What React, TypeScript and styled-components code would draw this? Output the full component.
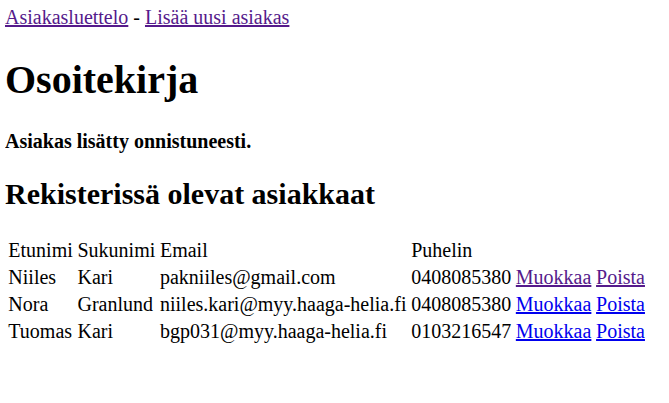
import React from "react";
import styled, { createGlobalStyle } from "styled-components";

const GlobalStyle = createGlobalStyle`
  html, body {
    background: #ffffff;
  }
  body {
    margin: 6px 5px;
    font-family: "Liberation Serif", "Times New Roman", serif;
    font-size: 20px;
    color: #000000;
  }
`;

const Nav = styled.div`
  line-height: normal;
`;

const Link = styled.a<{ $visited?: boolean }>`
  color: ${(p) => (p.$visited ? "#551a8b" : "#0000ee")};
  text-decoration: underline;
  cursor: pointer;
`;

const Title = styled.h1`
  font-size: 40px;
  font-weight: bold;
  margin: 26.8px 0;
`;

const Notice = styled.p`
  font-weight: bold;
  margin: 20px 0;
`;

const Subtitle = styled.h2`
  font-size: 30px;
  font-weight: bold;
  margin: 24.9px 0;
`;

const Table = styled.table`
  border-collapse: separate;
  border-spacing: 2px;
  font-size: 20px;
`;

const HeadCell = styled.th`
  font-weight: normal;
  text-align: left;
  padding: 1px 1.35px;
`;

const Cell = styled.td`
  padding: 1px 1.35px;
`;

type Customer = {
  first: string;
  last: string;
  email: string;
  phone: string;
  visited: boolean;
};

const customers: Customer[] = [
  { first: "Niiles", last: "Kari", email: "pakniiles@gmail.com", phone: "0408085380", visited: true },
  { first: "Nora", last: "Granlund", email: "niiles.kari@myy.haaga-helia.fi", phone: "0408085380", visited: false },
  { first: "Tuomas", last: "Kari", email: "bgp031@myy.haaga-helia.fi", phone: "0103216547", visited: false },
];

export default function App() {
  return (
    <>
      <GlobalStyle />
      <Nav>
        <Link $visited href="#">Asiakasluettelo</Link> - <Link $visited href="#">Lisää uusi asiakas</Link>
      </Nav>
      <Title>Osoitekirja</Title>
      <Notice>Asiakas lisätty onnistuneesti.</Notice>
      <Subtitle>Rekisterissä olevat asiakkaat</Subtitle>
      <Table>
        <thead>
          <tr>
            <HeadCell>Etunimi</HeadCell>
            <HeadCell>Sukunimi</HeadCell>
            <HeadCell>Email</HeadCell>
            <HeadCell>Puhelin</HeadCell>
            <HeadCell></HeadCell>
            <HeadCell></HeadCell>
          </tr>
        </thead>
        <tbody>
          {customers.map((c) => (
            <tr key={c.email}>
              <Cell>{c.first}</Cell>
              <Cell>{c.last}</Cell>
              <Cell>{c.email}</Cell>
              <Cell>{c.phone}</Cell>
              <Cell>
                <Link $visited={c.visited} href="#">Muokkaa</Link>
              </Cell>
              <Cell>
                <Link $visited={c.visited} href="#">Poista</Link>
              </Cell>
            </tr>
          ))}
        </tbody>
      </Table>
    </>
  );
}
